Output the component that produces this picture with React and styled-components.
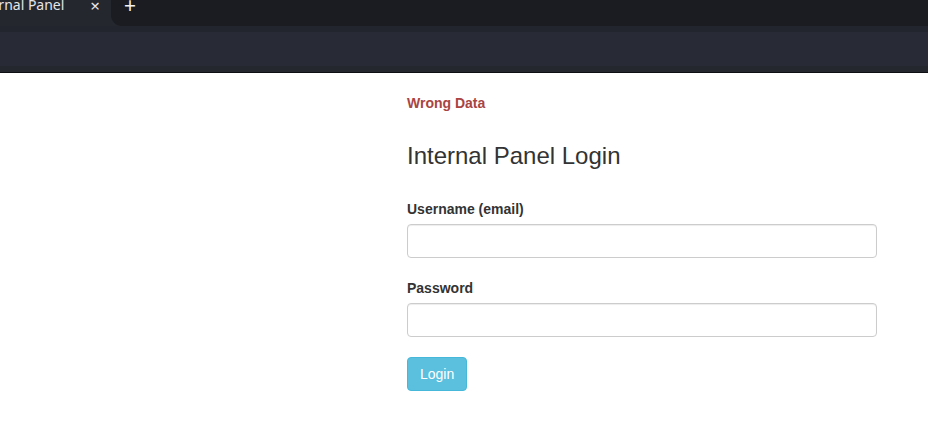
import React from 'react';
import styled, { createGlobalStyle } from 'styled-components';

const GlobalStyle = createGlobalStyle`
  html, body {
    margin: 0;
    padding: 0;
    background: #fff;
  }
  body {
    font-family: "Liberation Sans", Arial, sans-serif;
    font-size: 14px;
    color: #333;
  }
  *{
    box-sizing: border-box;
  }
`

const Chrome = styled.header`
  display: flex;
  flex-direction: column;
  font-family: "Noto Sans", "DejaVu Sans", sans-serif;
`

const TabStrip = styled.div`
  display: flex;
  height: 26px;
  background: #25272f;
`

const Tab = styled.div`
  display: flex;
  align-items: flex-start;
  width: 111px;
  overflow: hidden;
  color: #e4e5e9;
  font-size: 14px;
  line-height: 1;
`

const TabTitle = styled.span`
  margin-left: -28px;
  white-space: nowrap;
  flex: 1;
  margin-top: -2px;
`

const TabClose = styled.span`
  width: 22px;
  margin-right: 5px;
  text-align: center;
  font-size: 17px;
  margin-top: -3px;
`

const StripRest = styled.div`
  flex: 1;
  display: flex;
  align-items: flex-start;
  background: #1b1c21;
  border-bottom-left-radius: 11px;
  padding-left: 13px;
`

const NewTab = styled.span`
  color: #f2f2f2;
  font-size: 21px;
  line-height: 1;
  margin-top: -5px;
`

const Toolbar = styled.div`
  height: 46px;
  background: #282a36;
  border-top: 6px solid #23252e;
  border-bottom: 6px solid #25272f;
`

const Divider = styled.div`
  height: 1px;
  background: #0e0f12;
`

const Main = styled.main`
  padding: 20px 0 0 407px;
`

const Column = styled.div`
  width: 470px;
`

const ErrorText = styled.div`
  color: #a94442;
  font-weight: bold;
  line-height: 20px;
`

const Title = styled.h3`
  font-size: 24px;
  font-weight: 500;
  line-height: 26px;
  margin: 30px 0 30px;
  color: #333;
`

const FormGroup = styled.div`
  margin-bottom: 20px;
`

const Label = styled.label`
  display: block;
  font-weight: bold;
  line-height: 20px;
  margin-bottom: 5px;
`

const Input = styled.input`
  display: block;
  width: 100%;
  height: 34px;
  padding: 6px 12px;
  font-size: 14px;
  font-family: inherit;
  border: 1px solid #ccc;
  border-radius: 4px;
  box-shadow: inset 0 1px 1px rgba(0, 0, 0, .075);
  outline: none;
`

const Button = styled.button`
  height: 34px;
  padding: 6px 12px;
  font-size: 14px;
  font-family: inherit;
  line-height: 20px;
  color: #fff;
  background: #5bc0de;
  border: 1px solid #46b8da;
  border-radius: 4px;
`

const App = () => {
  return (
    <>
      <GlobalStyle />
      <Chrome>
        <TabStrip>
          <Tab>
            <TabTitle>Internal Panel</TabTitle>
            <TabClose>×</TabClose>
          </Tab>
          <StripRest>
            <NewTab>+</NewTab>
          </StripRest>
        </TabStrip>
        <Toolbar />
        <Divider />
      </Chrome>
      <Main>
        <Column>
          <ErrorText>Wrong Data</ErrorText>
          <Title>Internal Panel Login</Title>
          <form>
            <FormGroup>
              <Label>Username (email)</Label>
              <Input type="email" />
            </FormGroup>
            <FormGroup>
              <Label>Password</Label>
              <Input type="password" />
            </FormGroup>
            <Button type="button">Login</Button>
          </form>
        </Column>
      </Main>
    </>
  );
}

export default App;
